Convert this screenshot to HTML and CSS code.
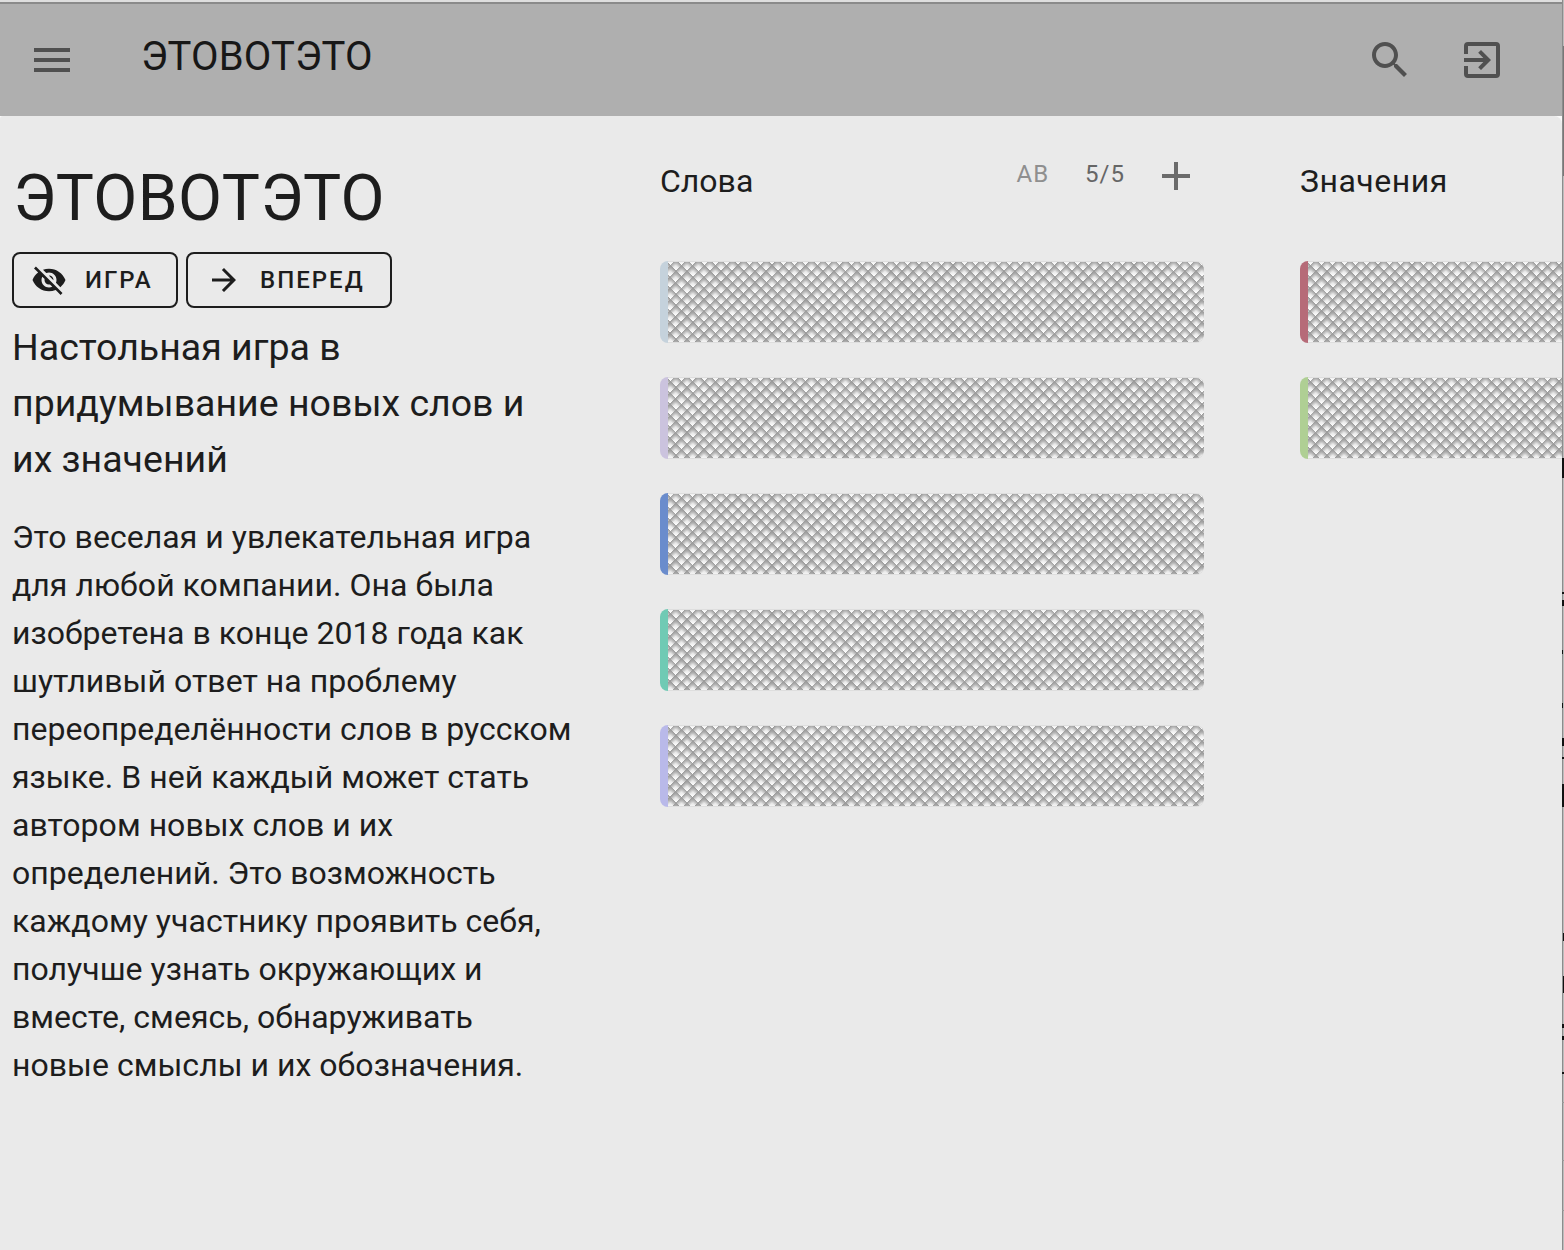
FILE: index.html
```
<!DOCTYPE html>
<html lang="ru">
<head>
<meta charset="utf-8">
<title>ЭТОВОТЭТО</title>
<link rel="stylesheet" href="styles.css">
</head>
<body>
<div class="window">
  <header class="bar">
    <svg class="icon" viewBox="0 0 24 24"><path d="M3 18h18v-2H3v2zm0-5h18v-2H3v2zm0-7v2h18V6H3z"/></svg>
    <span class="bar-title">ЭТОВОТЭТО</span>
    <svg class="icon" viewBox="0 0 24 24"><path d="M15.5 14h-.79l-.28-.27C15.41 12.59 16 11.11 16 9.5 16 5.91 13.09 3 9.5 3S3 5.91 3 9.5 5.91 16 9.5 16c1.61 0 3.09-.59 4.23-1.57l.27.28v.79l5 4.99L20.490 19l-4.990-5zm-6 0C7.010 14 5 11.990 5 9.500S7.010 5 9.500 5 14 7.010 14 9.500 11.990 14 9.500 14z"/></svg>
    <svg class="icon exit" viewBox="0 0 24 24"><path d="M3 9V5q0-2 2-2h14q2 0 2 2v14q0 2-2 2H5q-2 0-2-2v-4h2v4h14V5H5v4zM11.500 17l-1.410-1.410L12.670 13H3v-2h9.670l-2.580-2.590L11.500 7l5 5z"/></svg>
  </header>
  <main class="board">
    <section class="about">
      <h1>ЭТОВОТЭТО</h1>
      <div class="actions">
        <button class="btn game"><svg viewBox="0 0 24 24"><path d="M12 7c2.760 0 5 2.240 5 5 0 .650-.130 1.260-.360 1.830l2.920 2.920c1.510-1.260 2.700-2.890 3.430-4.750-1.730-4.390-6-7.500-11-7.500-1.400 0-2.740.250-3.980.700l2.160 2.160C10.740 7.130 11.350 7 12 7zM2 4.270l2.280 2.280.460.460C3.080 8.300 1.780 10.020 1 12c1.730 4.390 6 7.500 11 7.500 1.550 0 3.030-.300 4.380-.840l.420.420L19.730 22 21 20.730 3.270 3 2 4.270zM7.530 9.800l1.550 1.550c-.050.210-.080.430-.080.650 0 1.660 1.340 3 3 3 .220 0 .440-.030.650-.080l1.550 1.550c-.670.330-1.410.530-2.200.530-2.760 0-5-2.240-5-5 0-.790.200-1.530.530-2.200zm4.310-.780l3.150 3.150.020-.160c0-1.660-1.340-3-3-3l-.170.010z"/></svg><span>ИГРА</span></button>
        <button class="btn next"><svg viewBox="0 0 24 24"><path d="M12 4l-1.410 1.410L16.170 11H4v2h12.170l-5.580 5.590L12 20l8-8z"/></svg><span>ВПЕРЕД</span></button>
      </div>
      <h2>Настольная игра в<br>придумывание новых слов и<br>их значений</h2>
      <p>Это веселая и увлекательная игра<br>для любой компании. Она была<br>изобретена в конце 2018 года как<br>шутливый ответ на проблему<br>переопределённости слов в русском<br>языке. В ней каждый может стать<br>автором новых слов и их<br>определений. Это возможность<br>каждому участнику проявить себя,<br>получше узнать окружающих и<br>вместе, смеясь, обнаруживать<br>новые смыслы и их обозначения.</p>
    </section>
    <section class="column">
      <div class="head"><h3>Слова</h3><span class="sort">АВ</span><span class="count">5/5</span><svg class="plus" viewBox="0 0 28 28"><path d="M12 0h4v12h12v4H16v12h-4V16H0v-4h12z"/></svg></div>
      <div class="card sky"></div>
      <div class="card lilac"></div>
      <div class="card blue"></div>
      <div class="card teal"></div>
      <div class="card violet"></div>
    </section>
    <section class="column meanings">
      <div class="head"><h3>Значения</h3></div>
      <div class="card rose"></div>
      <div class="card green"></div>
    </section>
  </main>
</div>
<svg class="behind" viewBox="0 0 2 1250"><path fill="#777" d="M1 46h1v130H1z"/><path fill="#111" d="M0 458h2v20H0zM0 592h2v2H0zM0 600h2v6H0zM0 650h1v4H0zM0 703h1v5H0zM0 738h2v8H0zM0 757h2v2H0zM0 784h2v23H0zM1 933h1v8H1zM1 976h1v17H1zM0 1024h2v4H0zM0 1036h2v4H0zM0 1072h2v2H0z"/><path fill="#999" d="M0 1102h2v1H0zM0 1160h2v1H0zM0 1210h2v1H0z"/></svg>
</body>
</html>
```
FILE: styles.css
```
* { box-sizing: border-box; }
body {
  margin: 0;
  width: 1564px;
  height: 1250px;
  overflow: hidden;
  display: flex;
  background: #adadad;
  color: #1d1d1d;
  font-family: Roboto, "Noto Sans", sans-serif;
}
.window {
  width: 1562px;
  height: 1250px;
  overflow: hidden;
  background: #fafafa;
  border-top: 2px solid #dedede;
}
.behind { width: 2px; height: 1250px; background: linear-gradient(90deg, #8c8c8c 50%, #bcbcbc 50%); }
.bar {
  height: 114px;
  padding: 0 56px 0 28px;
  display: flex;
  align-items: center;
  background: #afafaf;
  border-top: 2px solid #8a8a8a;
}
.icon { width: 48px; height: 48px; fill: #505050; }
.bar-title { flex: 1; margin-left: 65px; font-size: 40px; line-height: 48px; letter-spacing: .15px; padding-bottom: 6px; color: #171717; }
.exit { margin-left: 44px; }
.board {
  height: 1134px;
  display: flex;
  overflow: hidden;
  background: #eaeaea;
  border-radius: 3px 8px 0 0;
}
.about { flex: 0 0 660px; padding: 51px 0 0 12px; }
h1, h2, h3, p { margin: 0; font-weight: 400; white-space: nowrap; }
h1 { font-size: 64px; line-height: 64px; letter-spacing: .4px; padding-left: 1px; }
.actions { display: flex; gap: 8px; margin-top: 21px; }
.btn {
  display: flex;
  align-items: center;
  height: 56px;
  padding: 0 0 0 17px;
  background: none;
  border: 2px solid #1d1d1d;
  border-radius: 8px;
  color: #1d1d1d;
  font: 500 24px/36px Roboto, sans-serif;
  letter-spacing: 2px;
}
.btn svg { width: 36px; height: 36px; fill: #1d1d1d; margin-right: 18px; }
.game { width: 166px; }
.next { width: 206px; padding-left: 18px; }
h2 { margin-top: 11px; font-size: 37.5px; line-height: 56px; }
p { margin-top: 26px; font-size: 32px; line-height: 48px; letter-spacing: .03px; }
.column { flex: 0 0 544px; margin-right: 96px; }
.head { height: 145px; padding: 40px 14px 0 0; display: flex; align-items: flex-start; }
h3 { flex: 1; font-size: 32px; line-height: 50px; }
.meanings h3 { letter-spacing: .5px; }
.sort, .count { font-size: 24px; line-height: 36px; letter-spacing: 1px; color: #8f8f8f; }
.count { margin-left: 36px; color: #666; }
.plus { width: 28px; height: 28px; margin: 6px 0 0 37px; fill: #6b6b6b; }
.card {
  height: 82px;
  margin-bottom: 34px;
  padding: 1px 0 1px 8px;
  border-radius: 8px;
  background: linear-gradient(90deg, var(--tone) 8px, #dedede 8px);
}
.card::after {
  content: "";
  display: block;
  height: 80px;
  border-radius: 0 8px 8px 0;
  background:
    repeating-linear-gradient(45deg, rgba(154,154,154,0) 0, rgba(154,154,154,.12) 3.5px, rgb(154,154,154) 8px),
    repeating-linear-gradient(-45deg, rgba(154,154,154,0) 0, rgba(154,154,154,.12) 3.5px, rgb(154,154,154) 8px),
    #fff;
}
.sky { --tone: #c5d2dc; }
.lilac { --tone: #cbc3de; }
.blue { --tone: #6a8ccc; }
.teal { --tone: #70cab4; }
.violet { --tone: #b9b9e9; }
.rose { --tone: #b66b78; }
.green { --tone: #afcf94; }
```
